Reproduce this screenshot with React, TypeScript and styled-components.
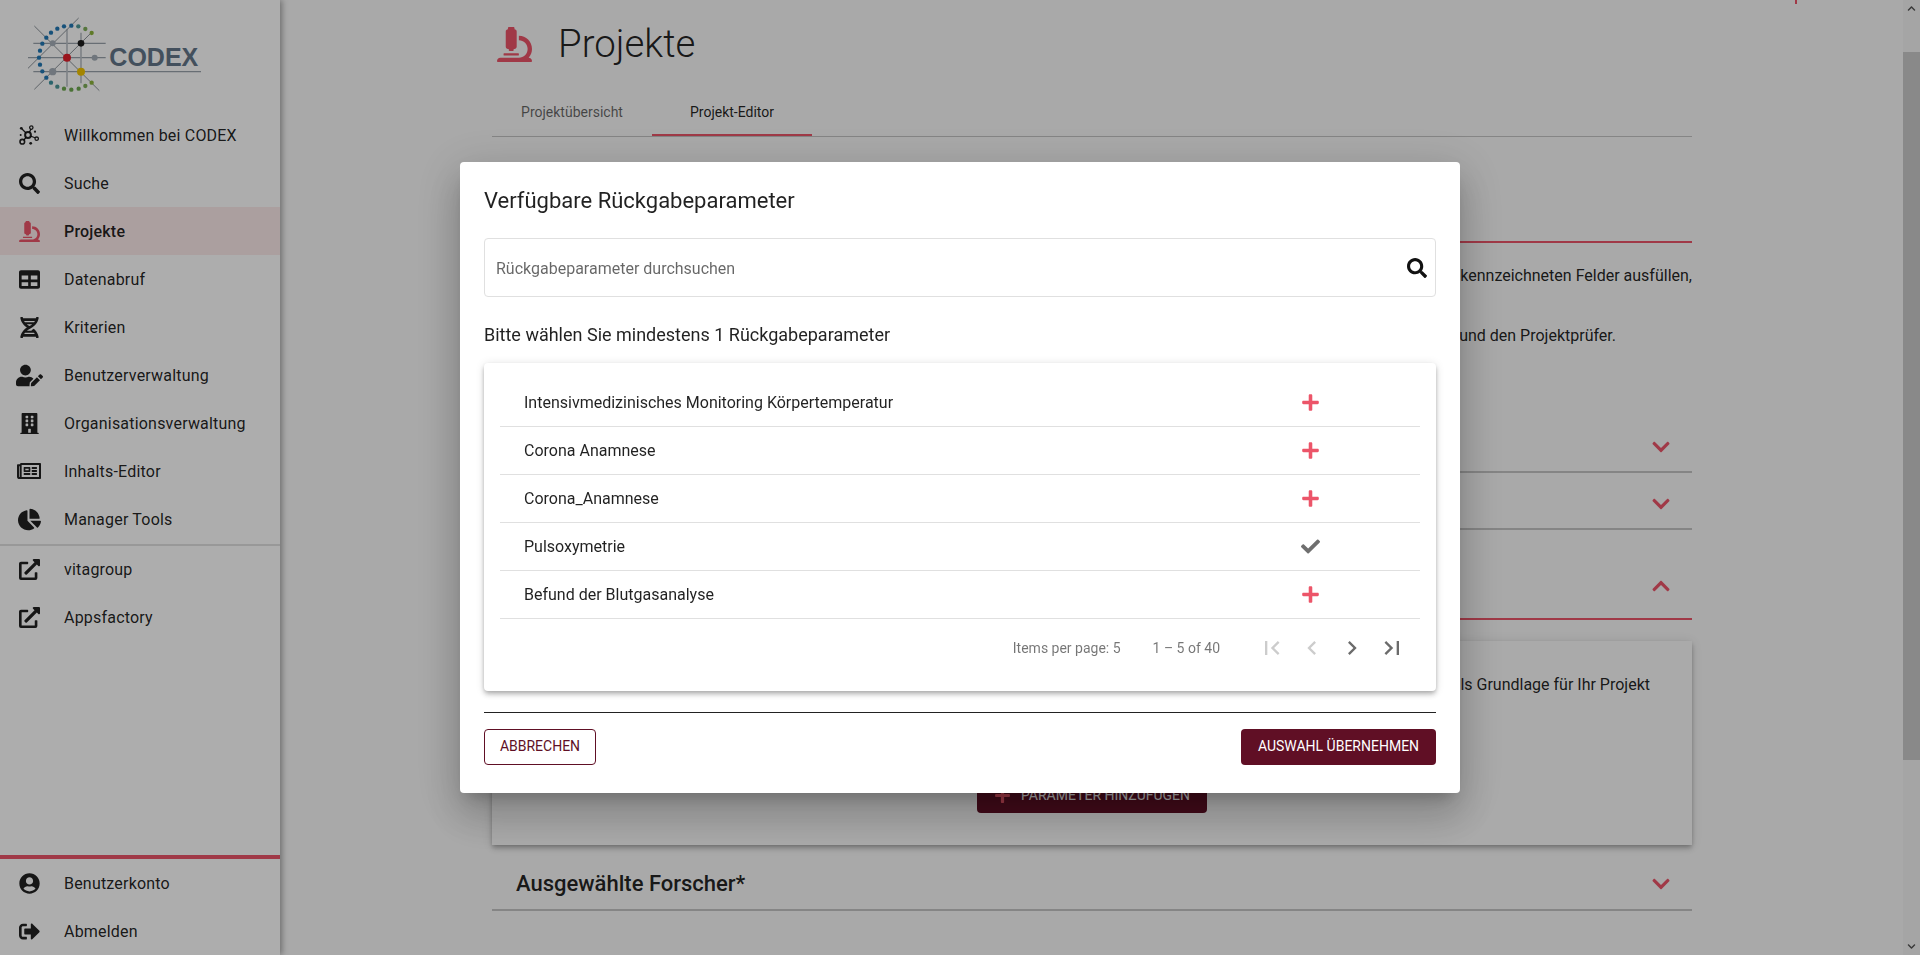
import React from "react";
import styled, { createGlobalStyle } from "styled-components";
import {
  FaSearch, FaMicroscope, FaTable, FaDna, FaUserEdit, FaBuilding, FaRegNewspaper, FaChartPie,
  FaExternalLinkAlt, FaUserCircle, FaSignOutAlt, FaChevronDown, FaChevronUp, FaPlus, FaCheck,
} from "react-icons/fa";

const Global = createGlobalStyle`
  html, body { margin: 0; padding: 0; height: 100%; overflow: hidden; }
  body { font-family: Roboto, "Liberation Sans", sans-serif; color: rgba(0,0,0,.87); background: #f9f9f9; }
  * { box-sizing: border-box; }
`;

const pink = "#ec5569";
const wine = "#600f25";

const Shell = styled.div`
  display: flex;
  width: 1920px;
  height: 955px;
  overflow: hidden;
  position: relative;
`;

const Sidebar = styled.aside`
  width: 280px;
  flex: none;
  height: 100%;
  background: #fff;
  box-shadow: 2px 0 6px rgba(0, 0, 0, .35);
  display: flex;
  flex-direction: column;
  z-index: 1;
`;

const LogoArea = styled.div`
  height: 111px;
  flex: none;
`;

const NavList = styled.nav`
  display: flex;
  flex-direction: column;
`;

const NavItem = styled.a<{ $active?: boolean }>`
  display: grid;
  grid-template-columns: 64px 1fr;
  align-items: center;
  height: 48px;
  font-size: 16px;
  letter-spacing: .2px;
  font-weight: ${(p) => (p.$active ? 500 : 400)};
  background: ${(p) => (p.$active ? "#fdebeb" : "transparent")};
`;

const NavIcon = styled.span<{ $active?: boolean }>`
  width: 58px;
  display: flex;
  justify-content: center;
  align-items: center;
  color: ${(p) => (p.$active ? pink : "rgba(0,0,0,.87)")};
`;

const NavDivider = styled.div`
  height: 2px;
  background: #e0e0e0;
  margin-top: 1px;
  margin-bottom: -1px;
`;

const NavFoot = styled.div`
  margin-top: auto;
  border-top: 4px solid ${pink};
`;

const Main = styled.main`
  flex: 1;
  min-width: 0;
  padding-left: 212px;
  padding-right: 211px;
  position: relative;
`;

const TopTick = styled.i`
  position: absolute;
  top: 0;
  left: 1515px;
  width: 2px;
  height: 4px;
  background: ${pink};
`;

const PageHead = styled.header`
  height: 88px;
  display: flex;
  align-items: center;
  padding-left: 5px;
  gap: 26px;
  color: ${pink};
`;

const PageTitle = styled.h1`
  margin: 0;
  font-size: 38.4px;
  font-weight: 300;
  color: rgba(0, 0, 0, .87);
  line-height: 48px;
`;

const Tabs = styled.div`
  display: flex;
  height: 49px;
  border-bottom: 1px solid #c4c4c4;
`;

const Tab = styled.div<{ $active?: boolean }>`
  width: 160px;
  height: 48px;
  display: flex;
  align-items: center;
  justify-content: center;
  font-size: 14px;
  color: ${(p) => (p.$active ? "rgba(0,0,0,.87)" : "rgba(0,0,0,.6)")};
  border-bottom: ${(p) => (p.$active ? `2px solid ${pink}` : "none")};
  padding-top: ${(p) => (p.$active ? "2px" : "0")};
`;

const SectionRule = styled.div`
  height: 106px;
  border-bottom: 2px solid ${pink};
`;

const IntroLine = styled.p<{ $top: number; $inset: number }>`
  margin: ${(p) => p.$top}px 0 0;
  line-height: 24px;
  font-size: 16px;
  white-space: nowrap;
  text-align: right;
  padding-right: ${(p) => p.$inset}px;
`;

const AccordionRow = styled.div<{ $top: number; $height: number; $red?: boolean }>`
  margin-top: ${(p) => p.$top}px;
  height: ${(p) => p.$height}px;
  border-bottom: 2px solid ${(p) => (p.$red ? pink : "#c4c4c4")};
  display: flex;
  align-items: center;
  justify-content: space-between;
  padding: 0 21px 0 24px;
  color: ${pink};
`;

const AccordionTitle = styled.h3`
  margin: 0;
  font-size: 22px;
  font-weight: 500;
  color: rgba(0, 0, 0, .87);
`;

const ParamCard = styled.section`
  margin-top: 21px;
  height: 204px;
  background: #fbfbfb;
  box-shadow: 0 2px 4px -1px rgba(0,0,0,.2), 0 4px 5px 0 rgba(0,0,0,.14), 0 1px 10px 0 rgba(0,0,0,.12);
  padding-top: 32px;
  display: flex;
  flex-direction: column;
`;

const AddButton = styled.button`
  align-self: center;
  margin-top: 80px;
  width: 230px;
  height: 36px;
  border: 0;
  border-radius: 4px;
  background: ${wine};
  color: #fff;
  font: 400 14px Roboto, sans-serif;
  display: flex;
  align-items: center;
  justify-content: center;
  gap: 10px;
`;

const PlusMark = styled.span`
  color: ${pink};
  display: flex;
`;

const Scrollbar = styled.div`
  width: 17px;
  flex: none;
  height: 100%;
  background: #f4f4f4;
  display: flex;
  flex-direction: column;
  align-items: center;
  color: #555;
`;

const ScrollArrow = styled.div`
  height: 17px;
  display: flex;
  align-items: center;
  justify-content: center;
  flex: none;
`;

const ScrollTrack = styled.div`
  flex: 1;
  width: 100%;
  padding: 35px 0 178px;
  display: flex;
`;

const ScrollThumb = styled.div`
  flex: 1;
  background: #cbcbcb;
`;

const Overlay = styled.div`
  position: fixed;
  inset: 0;
  background: rgba(0, 0, 0, .32);
  display: flex;
  align-items: center;
  justify-content: center;
  z-index: 5;
`;

const Modal = styled.div`
  width: 1000px;
  background: #fff;
  border-radius: 4px;
  padding: 22px 24px 28px;
  box-shadow: 0 11px 15px -7px rgba(0,0,0,.2), 0 24px 38px 3px rgba(0,0,0,.14), 0 9px 46px 8px rgba(0,0,0,.12);
`;

const ModalTitle = styled.h2`
  margin: 0;
  font-size: 22px;
  font-weight: 400;
  line-height: 32px;
  padding-top: 1px;
  height: 32px;
`;

const SearchField = styled.div`
  margin-top: 22px;
  height: 59px;
  border: 1px solid #e0e0e0;
  border-radius: 4px;
  display: flex;
  align-items: center;
  justify-content: space-between;
  padding: 0 4px 0 9px;
  color: #111;
`;

const SearchHint = styled.span`
  font-size: 16px;
  margin-left: 2px;
  padding-top: 1px;
  color: rgba(0, 0, 0, .6);
`;

const SearchGlyph = styled.span`
  display: flex;
  padding-right: 4px;
`;

const ChooseLabel = styled.p`
  margin: 26px 0 0;
  font-size: 18px;
  line-height: 24px;
`;

const ListCard = styled.div`
  margin-top: 16px;
  height: 328px;
  border-radius: 4px;
  padding: 16px 16px 0;
  background: #fff;
  box-shadow: 0 2px 4px -1px rgba(0,0,0,.2), 0 4px 5px 0 rgba(0,0,0,.14), 0 1px 10px 0 rgba(0,0,0,.12);
`;

const ListRow = styled.div`
  height: 48px;
  border-bottom: 1px solid #e0e0e0;
  display: grid;
  grid-template-columns: 746px 80px;
  align-items: center;
  padding-left: 24px;
  font-size: 16px;
`;

const RowAction = styled.span<{ $done?: boolean }>`
  display: flex;
  justify-content: center;
  color: ${(p) => (p.$done ? "#6f6f6f" : pink)};
`;

const Paginator = styled.div`
  height: 58px;
  display: flex;
  align-items: center;
  justify-content: flex-end;
  padding-right: 8px;
  font-size: 14px;
  color: rgba(0, 0, 0, .54);
`;

const PageSize = styled.span`
  margin-right: 32px;
`;

const RangeLabel = styled.span`
  margin-right: 32px;
`;

const PageButton = styled.span<{ $off?: boolean }>`
  width: 40px;
  height: 40px;
  display: flex;
  align-items: center;
  justify-content: center;
  color: ${(p) => (p.$off ? "rgba(0,0,0,.2)" : "rgba(0,0,0,.58)")};
`;

const ModalRule = styled.hr`
  margin: 21px 0 0;
  border: 0;
  border-top: 1px solid #222;
`;

const Footer = styled.div`
  margin-top: 16px;
  display: flex;
  justify-content: space-between;
`;

const CancelButton = styled.button`
  width: 112px;
  height: 36px;
  border: 1px solid ${wine};
  border-radius: 4px;
  background: #fff;
  color: ${wine};
  font: 400 14px Roboto, sans-serif;
  padding: 0 0 2px;
`;

const ApplyButton = styled.button`
  width: 195px;
  height: 36px;
  border: 0;
  border-radius: 4px;
  background: ${wine};
  color: #fff;
  font: 400 14px Roboto, sans-serif;
  padding: 0 0 2px;
`;

const dots: [number, number, string][] = [
  [275, 99, "#8cb43c"], [256, 87, "#7fae5a"], [235, 79, "#4f9a9a"], [214, 77, "#2278b4"], [192, 79, "#2278b4"],
  [172, 86, "#2278b4"], [153, 98, "#2278b4"], [139, 113, "#2278b4"], [127, 131, "#2278b4"], [120, 152, "#2278b4"],
  [117, 173, "#2278b4"], [120, 194, "#2278b4"], [127, 214, "#2278b4"], [139, 233, "#2278b4"], [153, 248, "#3f94a0"],
  [172, 260, "#4f9a9a"], [192, 266, "#6ea850"], [214, 269, "#6ea850"], [236, 266, "#6ea850"], [256, 258, "#7fae5a"], [275, 248, "#8cb43c"],
];

const Logo = () => (
  <svg width="290" height="111" viewBox="0 0 870 333" role="img" aria-label="CODEX">
    <g stroke="#a9aeb3" strokeWidth="4" fill="none">
      <path d="M100 130H317M84 173H317M100 215H603" stroke="#9aa3ab" />
      <path d="M201 88V260M243 98V250" strokeWidth="5" stroke="#bcc2c7" />
      <path d="M103 78L298 272M236 54L84 205M275 97L103 268" strokeWidth="3" stroke="#8b9299" />
    </g>
    {dots.map(([x, y, c]) => (
      <circle key={`${x}-${y}`} cx={x} cy={y} r="6.5" fill={c} />
    ))}
    <circle cx="158" cy="130" r="9" fill="#a6afb8" />
    <circle cx="243" cy="130" r="10" fill="#1c1c1c" />
    <circle cx="201" cy="173" r="12" fill="#e3202c" />
    <circle cx="284" cy="173" r="9" fill="#a6afb8" />
    <circle cx="158" cy="215" r="11" fill="#a6afb8" />
    <circle cx="243" cy="215" r="12" fill="#f2c500" />
    <text x="328" y="197" fontFamily="'Liberation Sans', sans-serif" fontWeight="700" fontSize="75" fill="#64768a">CODEX</text>
  </svg>
);

const MoleculeIcon = () => (
  <svg width="20" height="20" viewBox="0 0 20 20" fill="none" stroke="currentColor" strokeWidth="1.3">
    <path d="M9 10L12 4M9 10L3 4M9 10L16.5 13M9 10L4.5 15.5" />
    <circle cx="9" cy="10" r="2.9" strokeWidth="2" fill="#fff" />
    <circle cx="12.3" cy="2.6" r="1.7" fill="#fff" />
    <circle cx="2.3" cy="3.3" r="1.4" fill="currentColor" stroke="none" />
    <circle cx="17.7" cy="13.7" r="1.7" fill="#fff" />
    <circle cx="16" cy="6.7" r="1.1" fill="currentColor" stroke="none" />
    <circle cx="3.3" cy="16.7" r="2.3" strokeWidth="1.6" fill="#fff" />
    <circle cx="1.7" cy="10" r="1" fill="currentColor" stroke="none" />
    <circle cx="11.7" cy="18.3" r="1.4" fill="currentColor" stroke="none" />
  </svg>
);

const PageIcon = ({ d }: { d: string }) => (
  <svg width="28" height="28" viewBox="0 0 24 24" fill="currentColor"><path d={d} /></svg>
);

const topNav: { label: string; icon: React.ReactNode; active?: boolean }[] = [
  { label: "Willkommen bei CODEX", icon: <MoleculeIcon /> },
  { label: "Suche", icon: <FaSearch size={21} /> },
  { label: "Projekte", icon: <FaMicroscope size={21} />, active: true },
  { label: "Datenabruf", icon: <FaTable size={21} /> },
  { label: "Kriterien", icon: <FaDna size={21} /> },
  { label: "Benutzerverwaltung", icon: <FaUserEdit size={27} /> },
  { label: "Organisationsverwaltung", icon: <FaBuilding size={21} /> },
  { label: "Inhalts-Editor", icon: <FaRegNewspaper size={24} /> },
  { label: "Manager Tools", icon: <FaChartPie size={23} /> },
];

const links = ["vitagroup", "Appsfactory"];

const params: { name: string; done?: boolean }[] = [
  { name: "Intensivmedizinisches Monitoring Körpertemperatur" },
  { name: "Corona Anamnese" },
  { name: "Corona_Anamnese" },
  { name: "Pulsoxymetrie", done: true },
  { name: "Befund der Blutgasanalyse" },
];

export default function App() {
  return (
    <Shell>
      <Global />
      <Sidebar>
        <LogoArea><Logo /></LogoArea>
        <NavList>
          {topNav.map((n) => (
            <NavItem key={n.label} $active={n.active}>
              <NavIcon $active={n.active}>{n.icon}</NavIcon>
              {n.label}
            </NavItem>
          ))}
        </NavList>
        <NavDivider />
        <NavList>
          {links.map((l) => (
            <NavItem key={l}>
              <NavIcon><FaExternalLinkAlt size={21} /></NavIcon>
              {l}
            </NavItem>
          ))}
        </NavList>
        <NavFoot>
          <NavList>
            <NavItem>
              <NavIcon><FaUserCircle size={21} /></NavIcon>
              Benutzerkonto
            </NavItem>
            <NavItem>
              <NavIcon><FaSignOutAlt size={21} /></NavIcon>
              Abmelden
            </NavItem>
          </NavList>
        </NavFoot>
      </Sidebar>
      <Main>
        <TopTick />
        <PageHead>
          <FaMicroscope size={35} />
          <PageTitle>Projekte</PageTitle>
        </PageHead>
        <Tabs>
          <Tab>Projektübersicht</Tab>
          <Tab $active>Projekt-Editor</Tab>
        </Tabs>
        <SectionRule />
        <IntroLine $top={21} $inset={0}>gekennzeichneten Felder ausfüllen,</IntroLine>
        <IntroLine $top={36} $inset={76}>und den Projektprüfer.</IntroLine>
        <AccordionRow $top={74} $height={51}>
          <span />
          <FaChevronDown size={20} />
        </AccordionRow>
        <AccordionRow $top={6} $height={51}>
          <span />
          <FaChevronDown size={20} />
        </AccordionRow>
        <AccordionRow $top={24} $height={66} $red>
          <span />
          <FaChevronUp size={20} />
        </AccordionRow>
        <ParamCard>
          <IntroLine $top={0} $inset={42}>als Grundlage für Ihr Projekt</IntroLine>
          <AddButton>
            <PlusMark><FaPlus size={17} /></PlusMark>
            PARAMETER HINZUFÜGEN
          </AddButton>
        </ParamCard>
        <AccordionRow $top={13} $height={53}>
          <AccordionTitle>Ausgewählte Forscher*</AccordionTitle>
          <FaChevronDown size={20} />
        </AccordionRow>
      </Main>
      <Scrollbar>
        <ScrollArrow><FaChevronUp size={9} /></ScrollArrow>
        <ScrollTrack><ScrollThumb /></ScrollTrack>
        <ScrollArrow><FaChevronDown size={9} /></ScrollArrow>
      </Scrollbar>
      <Overlay>
        <Modal>
          <ModalTitle>Verfügbare Rückgabeparameter</ModalTitle>
          <SearchField>
            <SearchHint>Rückgabeparameter durchsuchen</SearchHint>
            <SearchGlyph><FaSearch size={20} /></SearchGlyph>
          </SearchField>
          <ChooseLabel>Bitte wählen Sie mindestens 1 Rückgabeparameter</ChooseLabel>
          <ListCard>
            {params.map((p) => (
              <ListRow key={p.name}>
                <span>{p.name}</span>
                <RowAction $done={p.done}>{p.done ? <FaCheck size={19} /> : <FaPlus size={19} />}</RowAction>
              </ListRow>
            ))}
            <Paginator>
              <PageSize>Items per page: 5</PageSize>
              <RangeLabel>1 – 5 of 40</RangeLabel>
              <PageButton $off><PageIcon d="M18.41 16.59L13.82 12l4.59-4.59L17 6l-6 6 6 6zM6 6h2v12H6z" /></PageButton>
              <PageButton $off><PageIcon d="M15.41 7.41L14 6l-6 6 6 6 1.41-1.41L10.83 12z" /></PageButton>
              <PageButton><PageIcon d="M10 6L8.59 7.41 13.17 12l-4.58 4.59L10 18l6-6z" /></PageButton>
              <PageButton><PageIcon d="M5.59 7.41L10.18 12l-4.59 4.59L7 18l6-6-6-6zM16 6h2v12h-2z" /></PageButton>
            </Paginator>
          </ListCard>
          <ModalRule />
          <Footer>
            <CancelButton>ABBRECHEN</CancelButton>
            <ApplyButton>AUSWAHL ÜBERNEHMEN</ApplyButton>
          </Footer>
        </Modal>
      </Overlay>
    </Shell>
  );
}
